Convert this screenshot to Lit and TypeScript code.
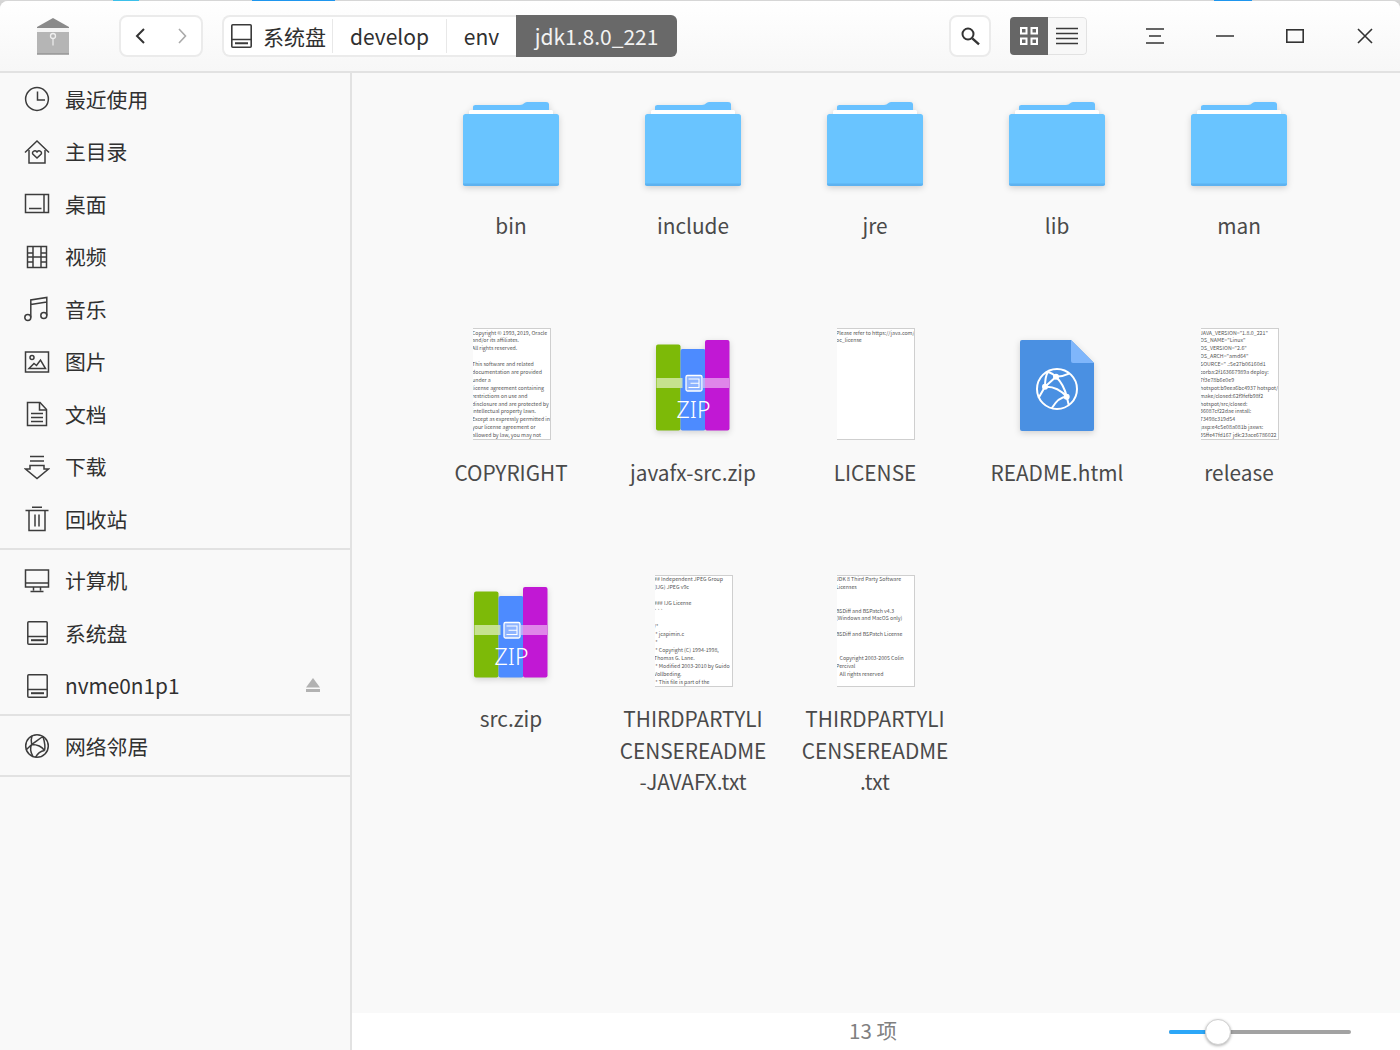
import { LitElement, html, css, svg } from "lit";
import { customElement } from "lit/decorators.js";

const diskIcon = svg`<svg class="ico" width="26" height="26" viewBox="0 0 26 26" fill="none" stroke="#3a3a3a" stroke-width="1.6"><rect x="3.8" y="1.8" width="19.4" height="22.4" rx="1"/><path d="M3.8 16.5h19.4"/><path d="M7 20.2h13" stroke-width="2"/></svg>`;

const navIcons: Record<string, unknown> = {
  clock: svg`<circle cx="13" cy="13" r="11.4"/><path d="M13.500 5.500v8.500h7.500"/>`,
  home: svg`<path d="M1 13.500 13 2l12 11.500"/><path d="M5 11v13h16V11"/><path d="M13 19l-4-3.800c-1.800-2.200 1.800-4.800 4-2.200 2.200-2.600 5.800 0 4 2.200z"/>`,
  desk: svg`<rect x="1.500" y="3.500" width="23" height="18"/><path d="M20 3.500v18M5 17.500h12.500"/>`,
  video: svg`<rect x="3.500" y="2.500" width="19" height="21"/><path d="M9 2.500v21M17 2.500v21M3.500 9h5.500M3.500 13h5.500M3.500 18h5.500M17 9h5.500M17 13h5.500M17 18h5.500M9 13h8"/>`,
  music: svg`<circle cx="3.800" cy="21.500" r="3"/><circle cx="19.800" cy="19.500" r="3"/><path d="M6.800 21.500V4l16-2.500v18M6.800 8.500l16-2.500"/>`,
  pic: svg`<rect x="1.500" y="3" width="23" height="20"/><circle cx="8" cy="8.500" r="2"/><path d="M5 19.500l5-5 2.500 2 4-5.500 5 8.500z"/>`,
  doc: svg`<path d="M3.500 1.500h12.500l6.500 7v16h-19z"/><path d="M15.500 1.500v7.500h7M7 12.500h12M7 16.500h12M7 20.500h12"/>`,
  down: svg`<path d="M6 2.500h14M6 7h14M6 11.500v3.500H1.500L13 24.500 24.500 15H20v-3.500z"/>`,
  trash: svg`<path d="M1.500 4.500h23M8 1.300h10M5 4.500v20h16v-20M11 8.500v12M15 8.500v12"/>`,
  pc: svg`<rect x="1.500" y="2" width="23" height="17"/><path d="M1.500 15h23M9.500 19v3.500M16.500 19v3.500M6.500 23.500h13"/>`,
  disk: svg`<rect x="3.800" y="1.800" width="19.400" height="22.400" rx="1"/><path d="M3.800 16.500h19.400"/><path d="M7 20.200h13" stroke-width="2"/>`,
  net: svg`<circle cx="13" cy="13" r="11.300"/><path d="M8 2.800c-1 3-1 6-.300 8.700 4.500 0 10 1.800 12.800 6M7.700 11.500 2 17M7.700 11.500c-2 3.500-1 8 1.300 12.200M19 3.500c-3 2-7 5-11.300 8M20.500 17.500c-3.500.500-7 3-9 6.800M20.500 17.500c1-3.500 0-9-1.500-14"/>`,
};

const navItem = (icon: string, label: string, extra: unknown = "") => html`
  <div class="nav-item">
    <svg class="nav-ico" width="26" height="26" viewBox="0 0 26 26" fill="none" stroke="#3c3c3c" stroke-width="1.500">${navIcons[icon]}</svg>
    <span class="nav-label">${label}</span>
    ${extra}
  </div>`;

const folder = svg`<svg width="98" height="90" viewBox="0 0 98 90" class="thumb-svg">
  <path d="M11 7c0-1.300 1-2 2.500-2H58c2 0 3-.8 4.500-2 1-.7 2-1 3.500-1h18c1.800 0 3 .8 3 2.500V12H11z" fill="#69c1ff"/>
  <rect x="7" y="10" width="84" height="6" rx="1.500" fill="#fff"/>
  <rect x="1" y="14" width="96" height="72" rx="2.500" fill="#69c4ff"/>
  <path d="M1 84c0 1.200 1 2 2.500 2h91c1.500 0 2.500-.8 2.500-2v-.6H1z" fill="#5db2f0"/>
</svg>`;

const zip = svg`<svg width="76" height="96" viewBox="0 0 76 96" class="thumb-svg">
  <rect x="1" y="5.500" width="24.500" height="86" rx="2" fill="#7dba08"/>
  <rect x="25.500" y="10" width="25" height="81.500" rx="2" fill="#4d8bff"/>
  <rect x="50" y="1" width="24.500" height="90.500" rx="2" fill="#c118d4"/>
  <rect x="1.500" y="39" width="26" height="10" fill="#d8ecb0" fill-opacity=".8"/>
  <rect x="48" y="39" width="26" height="10" fill="#f0c0f4" fill-opacity=".65"/>
  <rect x="31" y="36.500" width="16" height="15.500" rx="1.500" fill="#8eb4ff" stroke="#fff" stroke-width="1.300"/>
  <path d="M33.500 40H44v8.500H33.500M35.500 44.200H44" fill="none" stroke="#fff" stroke-width="1.100"/>
</svg>`;

const web = svg`<svg width="76" height="94" viewBox="0 0 76 94" class="thumb-svg">
  <path d="M1 3a2 2 0 0 1 2-2h49l23 23v66a2 2 0 0 1-2 2H3a2 2 0 0 1-2-2z" fill="#4a90e2"/>
  <path d="M52 1l23 23H54a2 2 0 0 1-2-2z" fill="#7fb6fb"/>
  <g fill="none" stroke="#fff" stroke-width="2">
    <circle cx="38" cy="50" r="20"/>
    <path d="M26 47.700c7-.5 15 2.500 22 10M26 47.700 19.500 59M26 47.700c0-6 .5-11 3-15M26 47.700 37 37.700M37 37.700c-2-2-4-3.500-8-5M37 37.700c5 0 9-1 13-3M37 37.700c5 5 9 12 10.700 20M47.700 57.700c-6 0-11 5-15 11.500M47.700 57.700l2 8"/>
  </g>
  <g fill="#fff"><circle cx="26" cy="47.700" r="3"/><circle cx="37" cy="37.700" r="3"/><circle cx="47.700" cy="57.700" r="3"/></g>
</svg>`;

type FileDef = { name: string; kind: string; lines?: string[] };

const files: FileDef[] = [
  { name: "bin", kind: "folder" },
  { name: "include", kind: "folder" },
  { name: "jre", kind: "folder" },
  { name: "lib", kind: "folder" },
  { name: "man", kind: "folder" },
  {
    name: "COPYRIGHT",
    kind: "text",
    lines: ["Copyright © 1993, 2019, Oracle", "and/or its affiliates.", "All rights reserved.", "", "This software and related", "documentation are provided", "under a", "license agreement containing", "restrictions on use and", "disclosure and are protected by", "intellectual property laws.", "Except as expressly permitted in", "your license agreement or", "allowed by law, you may not"],
  },
  { name: "javafx-src.zip", kind: "zip" },
  { name: "LICENSE", kind: "text", lines: ["Please refer to https://java.com/", "oc_license"] },
  { name: "README.html", kind: "web" },
  {
    name: "release",
    kind: "text",
    lines: ['JAVA_VERSION="1.8.0_221"', 'OS_NAME="Linux"', 'OS_VERSION="2.6"', 'OS_ARCH="amd64"', 'SOURCE=" .:5e27b06160d1', "corba:2f163667989a deploy:", "7f3e78b6e0e9", "hotspot:b9eea6bc4937 hotspot/", "make/closed:62f9fefb98f2", "hotspot/src/closed:", "36087cf22dae install:", "73498c319d54", "jaxp:e4c5e08a081b jaxws:", "35ffe47fd167 jdk:23ace6786022"],
  },
  { name: "src.zip", kind: "zip" },
  {
    name: "THIRDPARTYLICENSEREADME-JAVAFX.txt",
    kind: "text",
    lines: ["## Independent JPEG Group", "(IJG) JPEG v9c", "", "### IJG License", "```", "", "/*", " * jcapimin.c", " *", " * Copyright (C) 1994-1998,", "Thomas G. Lane.", " * Modified 2003-2010 by Guido", "Vollbeding.", " * This file is part of the"],
  },
  {
    name: "THIRDPARTYLICENSEREADME.txt",
    kind: "text",
    lines: ["JDK 8 Third Party Software", "Licenses", "", "", "BSDiff and BSPatch v4.3", "(Windows and MacOS only)", "", "BSDiff and BSPatch License", "", "", "   Copyright 2003-2005 Colin", "Percival", "   All rights reserved"],
  },
];

@customElement("app-root")
export class AppRoot extends LitElement {
  static styles = css`
    :host {
      display: block;
      width: 1400px;
      height: 1050px;
      overflow: hidden;
      background: #d4d4d4;
      font-family: "Noto Sans CJK SC", "Noto Sans", sans-serif;
      color: #303030;
    }
    .desk-strip { display: flex; height: 1px; }
    .s-a { width: 113px; background: #d6d6d6; }
    .s-b { width: 26px; background: #3cc0ea; }
    .s-c { width: 113px; background: #d6d6d6; }
    .s-d { width: 83px; background: #1e96ee; }
    .s-e { width: 879px; background: #d6d6d6; }
    .s-f { width: 38px; background: #1e96ee; }
    .s-g { flex: 1; background: #d6d6d6; }
    .window {
      height: 1049px;
      border-radius: 8px 8px 0 0;
      overflow: hidden;
      background: #f9f9f9;
      display: flex;
      flex-direction: column;
    }
    .header {
      height: 70px;
      flex: none;
      background: linear-gradient(#ffffff, #f7f7f7);
      border-bottom: 2px solid #e2e2e2;
      display: flex;
      align-items: flex-start;
    }
    .logo { margin: 17px 0 0 36px; width: 34px; height: 37px; flex: none; }
    .back-group {
      margin: 14px 0 0 49px;
      width: 84px;
      height: 42px;
      box-sizing: border-box;
      border: 2px solid #ebebeb;
      border-radius: 8px;
      background: #fff;
      display: flex;
      align-items: center;
      justify-content: space-between;
      padding: 0 13px;
      flex: none;
    }
    .crumbs {
      margin: 14px 0 0 19px;
      height: 42px;
      box-sizing: border-box;
      border: 2px solid #ebebeb;
      border-right: none;
      border-radius: 8px;
      background: #fff;
      display: flex;
      align-items: stretch;
      flex: none;
      font-size: 21px;
      color: #303030;
    }
    .crumb { display: flex; align-items: center; justify-content: center; box-sizing: border-box; flex: none; }
    .crumb-sep { border-right: 1px solid #e8e8e8; margin: 2px 0; }
    .c0 { width: 109px; gap: 9px; justify-content: flex-start; padding-left: 4px; }
    .c1 { width: 114px; }
    .c2 { width: 69px; }
    .c3 {
      width: 161px;
      margin: -2px 0;
      background: #696969;
      color: #f2f2f2;
      border-radius: 0 6px 6px 0;
    }
    .search {
      margin: 14px 0 0 272px;
      width: 42px;
      height: 42px;
      box-sizing: border-box;
      border: 2px solid #ebebeb;
      border-radius: 8px;
      background: #fff;
      display: flex;
      align-items: center;
      justify-content: center;
      flex: none;
    }
    .views {
      margin: 16px 0 0 19px;
      width: 77px;
      height: 38px;
      display: flex;
      border-radius: 4px;
      overflow: hidden;
      flex: none;
    }
    .view-a { width: 38px; background: #666; display: flex; align-items: center; justify-content: center; }
    .view-b {
      flex: 1;
      box-sizing: border-box;
      border: 1px solid #e2e2e2;
      border-left: none;
      border-radius: 0 4px 4px 0;
      background: #f8f8f8;
      display: flex;
      align-items: center;
      justify-content: center;
    }
    .wm { display: flex; margin-left: 33px; height: 70px; align-items: center; flex: none; }
    .wm-btn { width: 70px; height: 70px; display: flex; align-items: center; justify-content: center; }
    .body { flex: 1; display: flex; min-height: 0; }
    .side {
      width: 352px;
      box-sizing: border-box;
      flex: none;
      border-right: 2px solid #e2e2e2;
      background: #f9f9f9;
      display: flex;
      flex-direction: column;
    }
    .group { padding-bottom: 2px; border-bottom: 2px solid #e2e2e2; margin-bottom: 5px; }
    .group.b { padding-bottom: 2px; margin-bottom: 4px; }
    .nav-item { height: 52.500px; display: flex; align-items: center; padding-left: 24px; }
    .nav-ico { flex: none; }
    .nav-label { margin: -1px 0 0 15px; font-size: 20.800px; color: #303030; }
    .eject { margin-left: auto; margin-right: 30px; margin-top: -2px; }
    .main { flex: 1; display: flex; flex-direction: column; min-width: 0; }
    .grid {
      flex: 1;
      min-height: 0;
      display: grid;
      grid-template-columns: repeat(5, 182px);
      grid-auto-rows: 246.500px;
      padding: 9px 0 0 68px;
    }
    .file { display: flex; flex-direction: column; align-items: center; }
    .thumb { height: 120px; width: 182px; display: flex; align-items: flex-start; justify-content: center; flex: none; }
    .thumb.t-folder { padding-top: 18px; box-sizing: border-box; }
    .thumb.t-icon { padding-top: 10.500px; box-sizing: border-box; }
    .thumb-svg { display: block; }
    .shadow { filter: drop-shadow(0 2px 3px rgba(0, 0, 0, .16)); }
    .fname {
      margin-top: 8px;
      width: 150px;
      text-align: center;
      font-size: 20.800px;
      line-height: 31.500px;
      color: #4a4a4a;
      word-break: break-all;
      line-break: anywhere;
    }
    .page {
      width: 78px;
      height: 112px;
      box-sizing: border-box;
      background: #fff;
      border: 1px solid #cfcfcf;
      border-left: none;
      overflow: hidden;
      font-size: 5.250px;
      line-height: 7.900px;
      color: #555;
      white-space: pre;
      display: flex;
      flex-direction: column;
      margin: -0.500px 0 0 2px;
      padding-top: 0.500px;
    }
    .page div { height: 7.900px; flex: none; margin-left: -1px; }
    .zipwrap { position: relative; width: 76px; height: 96px; }
    .zipword {
      position: absolute;
      left: 1px;
      right: 0;
      top: 55px;
      text-align: center;
      color: #fff;
      font-size: 23px;
      line-height: 30px;
      font-family: "Noto Sans", sans-serif;
      font-weight: 300;
    }
    .status {
      height: 37px;
      flex: none;
      background: #fff;
      display: flex;
      align-items: center;
    }
    .count {
      width: 817px;
      box-sizing: border-box;
      padding-left: 225px;
      margin-top: -3px;
      text-align: center;
      font-size: 20.500px;
      color: #808080;
      flex: none;
    }
    .slider { position: relative; width: 182px; height: 4px; background: #a2a2a2; border-radius: 2px; margin-top: 1px; flex: none; }
    .slider-fill { position: absolute; left: 0; top: 0; height: 4px; width: 40px; background: #2ca7f8; border-radius: 2px 0 0 2px; }
    .thumb-knob {
      position: absolute;
      left: 36px;
      top: -11px;
      width: 26px;
      height: 26px;
      box-sizing: border-box;
      border-radius: 50%;
      background: #fff;
      border: 1px solid #d0d0d0;
      box-shadow: 0 1px 3px rgba(0, 0, 0, .3);
    }
  `;

  private renderThumb(f: FileDef) {
    if (f.kind === "folder") return html`<div class="thumb t-folder shadow">${folder}</div>`;
    if (f.kind === "zip")
      return html`<div class="thumb t-icon"><div class="zipwrap"><div class="shadow">${zip}</div><div class="zipword">ZIP</div></div></div>`;
    if (f.kind === "web") return html`<div class="thumb t-icon shadow">${web}</div>`;
    return html`<div class="thumb"><div class="page">${(f.lines || []).map((l) => html`<div>${l}</div>`)}</div></div>`;
  }

  render() {
    return html`
      <div class="desk-strip">
        <i class="s-a"></i><i class="s-b"></i><i class="s-c"></i><i class="s-d"></i><i class="s-e"></i><i class="s-f"></i><i class="s-g"></i>
      </div>
      <div class="window">
        <div class="header">
          <svg class="logo" viewBox="0 0 34 37">
            <path d="M1 9 17 0l16 9v3H1z" fill="#8a8a8a"/>
            <rect x="1" y="10" width="32" height="4" fill="#f4f4f4"/>
            <rect x="1" y="14" width="32" height="22" fill="#b5b5b5"/>
            <path d="M1 36h32" stroke="#969696" stroke-width="1.500"/>
            <circle cx="17" cy="18" r="2.500" fill="none" stroke="#eee" stroke-width="1.300"/>
            <path d="M17 20.500v7" stroke="#eee" stroke-width="1.200"/>
          </svg>
          <div class="back-group">
            <svg width="12" height="18" viewBox="0 0 12 18" fill="none" stroke="#333" stroke-width="2"><path d="M10 2 3 9l7 7"/></svg>
            <svg width="12" height="18" viewBox="0 0 12 18" fill="none" stroke="#aaa" stroke-width="1.600"><path d="M3 2l6.500 7L3 16"/></svg>
          </div>
          <div class="crumbs">
            <div class="crumb crumb-sep c0">${diskIcon}<span>系统盘</span></div>
            <div class="crumb crumb-sep c1">develop</div>
            <div class="crumb c2">env</div>
            <div class="crumb c3">jdk1.8.0_221</div>
          </div>
          <div class="search">
            <svg width="22" height="22" viewBox="0 0 22 22" fill="none" stroke="#333" stroke-width="2"><circle cx="9" cy="9" r="5.500"/><path d="M13.300 13.300l6.700 6" stroke-width="2.400"/></svg>
          </div>
          <div class="views">
            <div class="view-a">
              <svg width="20" height="20" viewBox="0 0 20 20" fill="none" stroke="#fff" stroke-width="2"><rect x="2" y="2" width="5.500" height="5.500"/><rect x="12.500" y="2" width="5.500" height="5.500"/><rect x="2" y="12.500" width="5.500" height="5.500"/><rect x="12.500" y="12.500" width="5.500" height="5.500"/></svg>
            </div>
            <div class="view-b">
              <svg width="22" height="18" viewBox="0 0 22 18" stroke="#3a3a3a" stroke-width="1.500"><path d="M0 1.500h22M0 6.500h22M0 11.500h22M0 16.500h22"/></svg>
            </div>
          </div>
          <div class="wm">
            <div class="wm-btn"><svg width="18" height="16" viewBox="0 0 18 16" stroke="#333" stroke-width="1.500"><path d="M0 1h18M3 8h12M0 15h18"/></svg></div>
            <div class="wm-btn"><svg width="18" height="2" viewBox="0 0 18 2" stroke="#333" stroke-width="1.600"><path d="M0 1h18"/></svg></div>
            <div class="wm-btn"><svg width="18" height="14" viewBox="0 0 18 14" fill="none" stroke="#333" stroke-width="1.600"><rect x=".8" y=".8" width="16.400" height="12.400"/></svg></div>
            <div class="wm-btn"><svg width="16" height="16" viewBox="0 0 16 16" stroke="#333" stroke-width="1.600"><path d="M1 1l14 14M15 1 1 15"/></svg></div>
          </div>
        </div>
        <div class="body">
          <div class="side">
            <div class="group">
              ${navItem("clock", "最近使用")}
              ${navItem("home", "主目录")}
              ${navItem("desk", "桌面")}
              ${navItem("video", "视频")}
              ${navItem("music", "音乐")}
              ${navItem("pic", "图片")}
              ${navItem("doc", "文档")}
              ${navItem("down", "下载")}
              ${navItem("trash", "回收站")}
            </div>
            <div class="group b">
              ${navItem("pc", "计算机")}
              ${navItem("disk", "系统盘")}
              ${navItem(
                "disk",
                "nvme0n1p1",
                html`<svg class="eject" width="14" height="14" viewBox="0 0 14 14" fill="#b2b2b2"><path d="M7 0l7 9.500H0z"/><rect y="11" width="14" height="3"/></svg>`
              )}
            </div>
            <div class="group b">${navItem("net", "网络邻居")}</div>
          </div>
          <div class="main">
            <div class="grid">
              ${files.map(
                (f) => html`<div class="file">${this.renderThumb(f)}<div class="fname">${f.name}</div></div>`
              )}
            </div>
            <div class="status">
              <div class="count">13 项</div>
              <div class="slider"><div class="slider-fill"></div><div class="thumb-knob"></div></div>
            </div>
          </div>
        </div>
      </div>
    `;
  }
}
